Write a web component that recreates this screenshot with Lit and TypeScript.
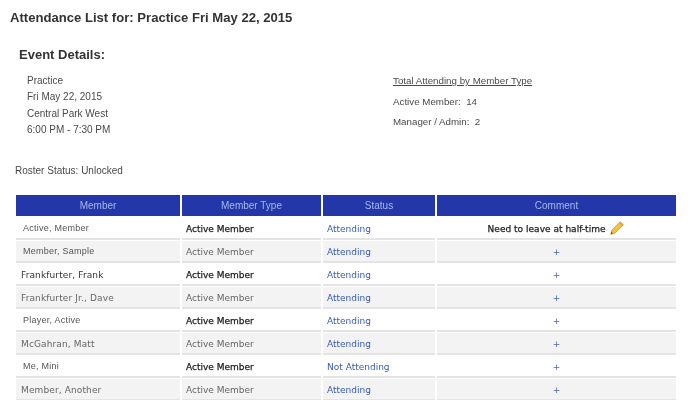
import { LitElement, html, css } from "lit";
import { customElement } from "lit/decorators.js";

const rows = [
  { name: "Active, Member", inset: true, status: "Attending", comment: "Need to leave at half-time" },
  { name: "Member, Sample", inset: true, status: "Attending" },
  { name: "Frankfurter, Frank", inset: false, status: "Attending" },
  { name: "Frankfurter Jr., Dave", inset: false, status: "Attending" },
  { name: "Player, Active", inset: true, status: "Attending" },
  { name: "McGahran, Matt", inset: false, status: "Attending" },
  { name: "Me, Mini", inset: true, status: "Not Attending" },
  { name: "Member, Another", inset: false, status: "Attending" },
];

@customElement("app-root")
export class AppRoot extends LitElement {
  static styles = css`
    :host { display: block; width: 693px; height: 400px; overflow: hidden; background: #fff; font-family: "Liberation Sans", Arial, sans-serif; color: #4a4a4a; }
    .page { filter: blur(0.4px); padding-top: 10px; }
    h1 { margin: 0 0 0 10px; font-size: 13.1px; line-height: 16px; font-weight: bold; color: #333; }
    h2 { margin: 20px 0 0 19px; font-size: 13px; line-height: 18px; font-weight: bold; color: #333; }
    .details { display: flex; margin-top: 9px; font-size: 10px; }
    .where { margin-left: 27px; width: 366px; }
    .where div { line-height: 16.4px; }
    .totals { font-size: 9.75px; }
    .totals u { display: block; line-height: 16px; }
    .totals div { margin-top: 4.5px; line-height: 16px; }
    .roster { margin: 25px 0 0 15px; font-size: 10px; line-height: 14px; }
    .table { margin: 17px 0 0 16px; width: 660px; }
    .row { display: grid; grid-template-columns: 164px 139px 112px 239px; column-gap: 2px; margin-top: 1px; }
    .head { height: 21px; margin: 0 0 2px; }
    .head div { background: #2337a8; color: #a9b6ec; font-size: 10px; line-height: 21px; text-align: center; }
    .cell { height: 20px; border-bottom: 2px solid #e4e4e4; font: 9px/22px "DejaVu Sans", Verdana, sans-serif; color: #666; background: #f3f3f3; white-space: nowrap; }
    .row:nth-child(even) .cell { background: #fff; color: #333; }
    .name { padding-left: 5px; }
    .name.inset { padding-left: 7px; font-family: "Liberation Sans", Arial, sans-serif; line-height: 20px; letter-spacing: 0.25px; color: #555; }
    .row:nth-child(even) .name.inset { color: #555; }
    .wide { letter-spacing: 0.12px; }
    .type { padding-left: 4px; }
    .row:nth-child(even) .type, .note { color: #222; -webkit-text-stroke: 0.25px #222; }
    .row .status, .row:nth-child(even) .status { padding-left: 4px; color: #3a5bb5; }
    .row .comment, .row:nth-child(even) .comment { text-align: center; color: #4a66b8; font-size: 9px; }
    .note { font-size: 9px; letter-spacing: 0.02px; }
    svg { width: 16px; height: 16px; vertical-align: -4px; margin-left: 1px; }
  `;

  render() {
    return html`<div class="page">
      <h1>Attendance List for: Practice Fri May 22, 2015</h1>
      <h2>Event Details:</h2>
      <div class="details">
        <div class="where">
          <div>Practice</div>
          <div>Fri May 22, 2015</div>
          <div>Central Park West</div>
          <div>6:00 PM - 7:30 PM</div>
        </div>
        <div class="totals">
          <u>Total Attending by Member Type</u>
          <div>Active Member:&nbsp; 14</div>
          <div>Manager / Admin:&nbsp; 2</div>
        </div>
      </div>
      <div class="roster">Roster Status: Unlocked</div>
      <div class="table">
        <div class="row head">
          <div>Member</div><div>Member Type</div><div>Status</div><div>Comment</div>
        </div>
        ${rows.map(
          (r) => html`<div class="row">
            <div class="cell name ${r.inset ? "inset" : "wide"}">${r.name}</div>
            <div class="cell type">Active Member</div>
            <div class="cell status">${r.status}</div>
            <div class="cell comment">
              ${r.comment
                ? html`<span class="note">${r.comment}</span>
                    <svg viewBox="0 0 14 14">
                      <path d="M1.5 12.5 L2.6 8.6 L9.8 1.6 L12.6 4.2 L5.4 11.3 Z" fill="#f0c24a" stroke="#c99a30" stroke-width=".7" />
                      <path d="M9.8 1.6 L12.6 4.2 L11.6 5.2 L8.8 2.6 Z" fill="#e8a33c" />
                      <path d="M1.5 12.5 L2.1 10.3 L3.6 11.8 Z" fill="#6b5a3a" />
                    </svg>`
                : "+"}
            </div>
          </div>`
        )}
      </div>
    </div>`;
  }
}
